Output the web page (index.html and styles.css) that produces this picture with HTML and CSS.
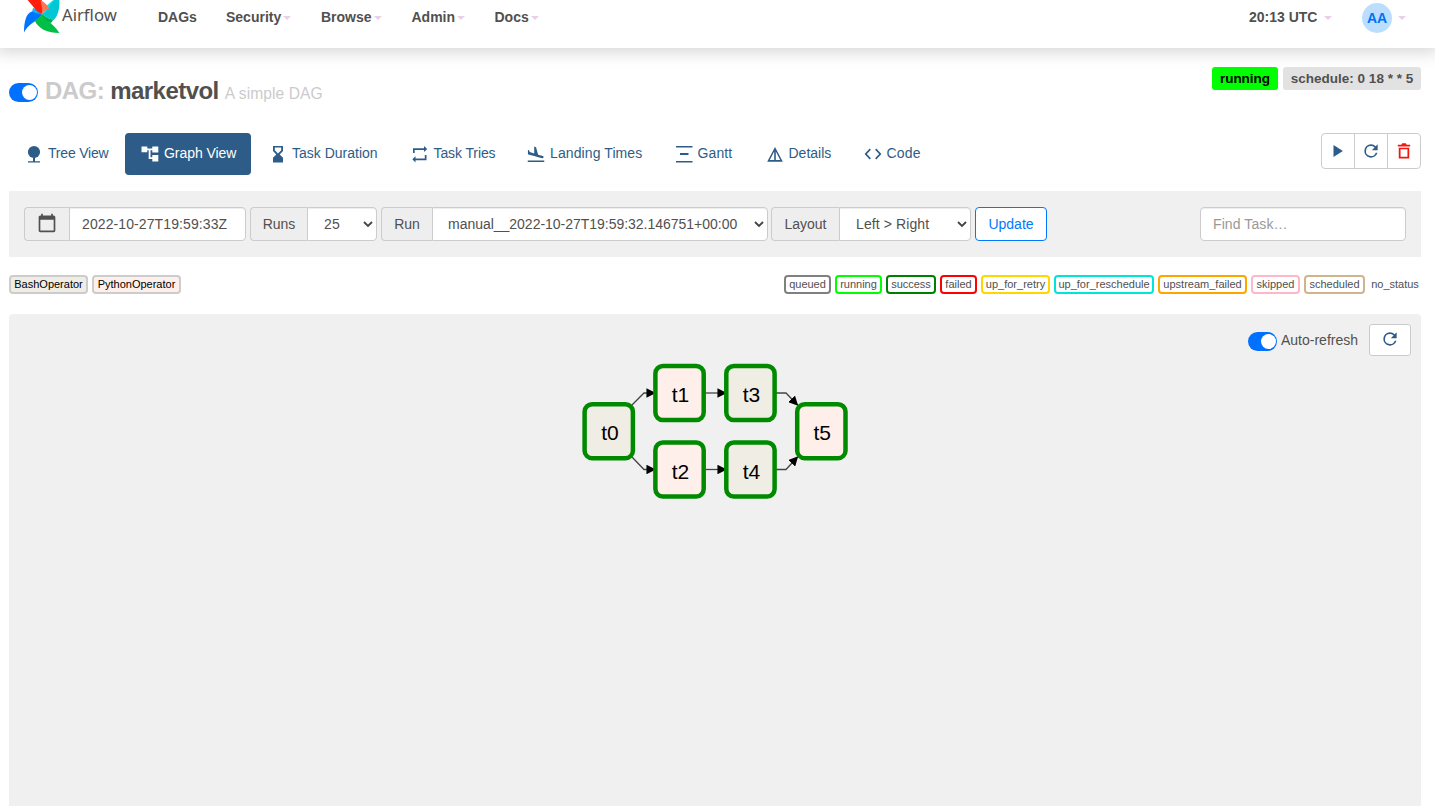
FILE: index.html
```
<!DOCTYPE html>
<html lang="en">
<head>
<meta charset="utf-8">
<title>marketvol - Graph - Airflow</title>
<link rel="stylesheet" href="styles.css">
</head>
<body>
<nav class="navbar">
  <a class="brand">
    <svg class="pinwheel" width="38" height="36" viewBox="0 0 38 36">
      <path fill="#0cb6ff" d="M9 12 L10 8 Q15 9 19 13.500 L15 16 Z"/>
      <path fill="#11e1ee" d="M19 13.500 L21 8 L29 1 L34 -2 L30 8 Z"/>
      <path fill="#00ad46" d="M19 13.500 Q24 19 30.500 19.500 L28 23 L20 20 Z"/>
      <path fill="#0073ff" d="M1 32.500 C1 22 3 13 9 11.500 C12 13 15 14.500 19 13.500 C16 22 7 21 1 32.500 Z"/>
      <path fill="#00bf46" d="M11.500 20 C16 19 17.500 16 19 13.500 C21 21 29 21 36.500 33 C25 33 15 29 11.500 20 Z"/>
      <path fill="#00c7d4" d="M36 -3 C37.500 7 35 17 30.500 20 C26 19 22 17 19 13.500 C27 11 25 3 36 -3 Z"/>
      <path fill="#ff1e0b" d="M1 -4 L18 -4 C19 0 19 4 21 7 L19 13.500 C13 13 10 5 1 -4 Z"/>
      <path fill="#ff7557" d="M19 13.500 C20 9 18 4 17.500 0 C21 2 25 5 26 9 C23 10 21 11 19 13.500 Z"/>
    </svg>
    <span class="brand-name">Airflow</span>
  </a>
  <a class="nav-link n-dags">DAGs</a>
  <a class="nav-link n-security">Security<i class="caret"></i></a>
  <a class="nav-link n-browse">Browse<i class="caret"></i></a>
  <a class="nav-link n-admin">Admin<i class="caret"></i></a>
  <a class="nav-link n-docs">Docs<i class="caret"></i></a>
  <div class="nav-right">
    <a class="nav-link clock">20:13 UTC<i class="caret"></i></a>
    <a class="nav-link user"><span class="avatar">AA</span><i class="caret"></i></a>
  </div>
</nav>
<main class="page">
  <header class="dag-header">
    <span class="toggle"></span>
    <h1 class="dag-title"><span class="muted">DAG:</span> marketvol <small>A simple DAG</small></h1>
    <div class="dag-status">
      <span class="label label-running">running</span>
      <span class="label label-schedule">schedule: 0 18 * * 5</span>
    </div>
  </header>
  <div class="tab-row">
    <ul class="tabs">
      <li class="tab t-tree"><svg class="icon" viewBox="0 0 18 18"><circle cx="9" cy="7" r="6.100"/><path d="M8 12h2v4.300h5v1.200H3v-1.200h5z"/></svg><span>Tree View</span></li>
      <li class="tab t-graph active"><svg class="icon" viewBox="0 0 18 18"><path d="M.5 1.500h5.800v2h5V1.500h6v6h-6v-2.200H9.500v7h1.800V10h6v6.500h-6v-2.400H7.700V5.300H6.300v1.900H.500z"/></svg><span>Graph View</span></li>
      <li class="tab t-duration"><svg class="icon" viewBox="0 0 18 18"><path fill-rule="evenodd" d="M4 1h10v5l-3.300 3.400L14 12.800V17.500H4v-4.700l3.300-3.400L4 6zM5.800 2.500v2.800L9 8.500l3.200-3.200V2.500z"/></svg><span>Task Duration</span></li>
      <li class="tab t-tries"><svg class="icon" viewBox="0 0 18 18"><path d="M2 8V3.200h11V1l3.200 3-3.200 3V4.900H3.700V8zM15.500 10v5.200h-11v2.200L1.300 14.300l3.200-3v2.200h9.300V10z"/></svg><span>Task Tries</span></li>
      <li class="tab t-landing"><svg class="icon" viewBox="0 0 24 24"><path d="M1 20.500h22v2H1zm8.680-5.770l4.350 1.160 6.310 1.620c.8.210 1.620-.26 1.840-1.060.21-.8-.26-1.620-1.060-1.840l-6.310-1.620-2.760-10.020L9.620 2v9.280L3.650 9.450l-.93-2.320-1.450-.39v5.670l1.600.43 6.810 1.890z"/></svg><span>Landing Times</span></li>
      <li class="tab t-gantt"><svg class="icon" viewBox="0 0 18 18"><path d="M1 1h16.500v1.500H1zM5 8h8.500v2H5zM1 16h16.500v1.500H1z"/></svg><span>Gantt</span></li>
      <li class="tab t-details"><svg class="icon" viewBox="0 0 18 18"><path fill-rule="evenodd" d="M9 2l7.800 14.800H1.200zM8.200 6.500L3.800 15h4.400zM9.800 6.500V15h4.400z"/></svg><span>Details</span></li>
      <li class="tab t-code"><svg class="icon" viewBox="0 0 24 24"><path d="M9.200 17.600L3.800 12l5.400-5.600L7.600 4.800.8 12l6.800 7.200zm5.600 0l5.400-5.600-5.400-5.600 1.600-1.600 6.800 7.200-6.800 7.200z"/></svg><span>Code</span></li>
    </ul>
    <div class="btn-group">
      <span class="btn-icon"><svg class="icon" viewBox="0 0 24 24"><path d="M6 4v16L18.500 12z"/></svg></span>
      <span class="btn-icon"><svg class="icon reload" viewBox="0 0 24 24"><path d="M17.650 6.350A7.950 7.950 0 0 0 12 4a8 8 0 1 0 7.730 10h-2.080A6 6 0 1 1 12 6c1.660 0 3.140.690 4.220 1.780L13 11h7V4z"/></svg></span>
      <span class="btn-icon danger"><svg class="icon" viewBox="0 0 24 24"><path fill-rule="evenodd" d="M5 7.500h14V22H5zM7.400 9.800v9.800h9.200V9.800zM3.800 3.500h4.700l1-1.700h5l1 1.700h4.700v2.500H3.800z"/></svg></span>
    </div>
  </div>
  <form class="filters">
    <div class="group g-date">
      <span class="addon"><svg width="24" height="24" viewBox="0 0 24 24"><path d="M20 3h-1V1h-2v2H7V1H5v2H4c-1.100 0-2 .9-2 2v16c0 1.100.9 2 2 2h16c1.100 0 2-.9 2-2V5c0-1.100-.9-2-2-2zm0 18H4V8h16z"/></svg></span>
      <span class="field">2022-10-27T19:59:33Z</span>
    </div>
    <div class="group g-runs"><span class="addon">Runs</span><span class="field select">25<svg class="chev" viewBox="0 0 10 7"><path d="M1 1l4 4 4-4"/></svg></span></div>
    <div class="group g-run"><span class="addon">Run</span><span class="field select"><span class="run-id">manual__2022-10-27T19:59:32.146751+00:00</span><svg class="chev" viewBox="0 0 10 7"><path d="M1 1l4 4 4-4"/></svg></span></div>
    <div class="group g-layout"><span class="addon">Layout</span><span class="field select">Left &gt; Right<svg class="chev" viewBox="0 0 10 7"><path d="M1 1l4 4 4-4"/></svg></span></div>
    <span class="update">Update</span>
    <span class="search">Find Task…</span>
  </form>
  <div class="legend">
    <span class="op op-bash">BashOperator</span>
    <span class="op op-python">PythonOperator</span>
    <div class="states">
      <span class="state s-queued">queued</span>
      <span class="state s-running">running</span>
      <span class="state s-success">success</span>
      <span class="state s-failed">failed</span>
      <span class="state s-retry">up_for_retry</span>
      <span class="state s-reschedule">up_for_reschedule</span>
      <span class="state s-upstream">upstream_failed</span>
      <span class="state s-skipped">skipped</span>
      <span class="state s-scheduled">scheduled</span>
      <span class="state s-none">no_status</span>
    </div>
  </div>
  <section class="graph">
    <div class="refresh">
      <span class="toggle"></span>
      <span class="refresh-text">Auto-refresh</span>
      <span class="refresh-btn"><svg class="icon reload" viewBox="0 0 24 24"><path d="M17.650 6.350A7.950 7.950 0 0 0 12 4a8 8 0 1 0 7.730 10h-2.080A6 6 0 1 1 12 6c1.660 0 3.140.690 4.220 1.780L13 11h7V4z"/></svg></span>
    </div>
    <svg class="dag" width="270" height="140" viewBox="580 361 270 140">
      <defs><marker id="arrow" viewBox="0 0 10 10" refX="9" refY="5" markerWidth="9.500" markerHeight="9.500" markerUnits="userSpaceOnUse" orient="auto"><path d="M0 0L10 5 0 10z"/></marker></defs>
      <g class="edges">
        <path d="M632 405L644 393H655"/><path d="M632 457L644 469.500H655"/>
        <path d="M704 393H726"/><path d="M704 469.500H726"/>
        <path d="M775 393H786L797.500 405"/><path d="M775 469.500H786L797.500 457"/>
      </g>
      <g class="nodes">
        <rect class="bash" x="584.600" y="404.200" width="48.300" height="54" rx="7.500"/>
        <rect class="python" x="655.400" y="366" width="48.300" height="54" rx="7.500"/>
        <rect class="python" x="655.400" y="442.500" width="48.300" height="54" rx="7.500"/>
        <rect class="bash" x="726.300" y="366" width="48.300" height="54" rx="7.500"/>
        <rect class="bash" x="726.300" y="442.500" width="48.300" height="54" rx="7.500"/>
        <rect class="python" x="797.200" y="404.200" width="48.300" height="54" rx="7.500"/>
      </g>
      <g class="names">
        <text x="610" y="440">t0</text><text x="680.500" y="402">t1</text><text x="680.500" y="479">t2</text>
        <text x="751.500" y="402">t3</text><text x="751.500" y="479">t4</text><text x="822.300" y="440">t5</text>
      </g>
    </svg>
  </section>
</main>
</body>
</html>
```
FILE: styles.css
```
* { box-sizing: border-box; }
body { margin: 0; height: 806px; overflow: hidden; display: flex; flex-direction: column; background: #fff; color: #51504f; font: 14px/20px "Liberation Sans", Arial, sans-serif; }
.navbar { height: 48px; flex: none; display: flex; align-items: flex-start; background: #fff; box-shadow: 0 0 16px 4px rgba(0,0,0,.17); padding-left: 23px; }
.brand { display: flex; width: 135px; }
.pinwheel { flex: none; }
.brand-name { font: 16.700px/20px "Noto Sans", sans-serif; margin: 5px 0 0 1px; }
.nav-link { display: flex; align-items: center; height: 34px; font-weight: bold; white-space: nowrap; }
.caret { border: 4px solid transparent; border-top-color: #e8d0e8; border-bottom: 0; margin: 1px 0 0 2px; }
.n-dags { width: 68px; }
.n-security { width: 95px; }
.n-browse { width: 90.500px; }
.n-admin { width: 83px; }
.nav-right { display: flex; margin-left: auto; padding-right: 29px; }
.clock { width: 113px; }
.clock .caret { margin-left: 7px; }
.user .caret { margin-left: 6px; }
.avatar { width: 30px; height: 30px; border-radius: 50%; background: #bbdeff; color: #0070f5; text-align: center; line-height: 31px; margin-top: 2px; }
.page { flex: 1; display: flex; flex-direction: column; padding: 0 14px 0 9px; }
.dag-header { height: 85px; flex: none; display: flex; align-items: flex-start; padding-top: 19px; }
.toggle { flex: none; width: 29px; height: 19px; border-radius: 10px; background: #0070ff; padding: 2px 1px; display: flex; justify-content: flex-end; }
.toggle::after { content: ""; width: 15px; height: 15px; border-radius: 50%; background: #fff; }
.dag-header .toggle { margin-top: 16px; }
.dag-title { margin: 10px 0 0 7px; font-size: 24px; line-height: 27px; font-weight: bold; letter-spacing: -.55px; white-space: nowrap; }
.dag-title .muted { color: #cbcbcb; }
.dag-title small { font-size: 15.600px; font-weight: normal; color: #cbcbcb; letter-spacing: .07px; }
.dag-status { display: flex; gap: 5px; margin-left: auto; }
.label { height: 23px; line-height: 23px; border-radius: 3px; font-weight: bold; font-size: 13.500px; text-align: center; white-space: nowrap; }
.label-running { width: 66px; background: #0f0; color: #000; }
.label-schedule { width: 138px; background: #e2e2e2; }
.tab-row { display: flex; height: 58px; flex: none; justify-content: space-between; }
.tabs { display: flex; margin: 0; padding: 0; list-style: none; color: #2d5c88; }
.tab { display: flex; align-items: center; height: 42px; padding-left: 16px; border-radius: 4px; white-space: nowrap; gap: 5px; }
.tab span { margin-bottom: 2px; }
.icon { width: 18px; height: 18px; fill: currentColor; flex: none; }
.reload { width: 20px; height: 20px; }
.t-tree { width: 116px; letter-spacing: -.2px; }
.active { width: 126px; background: #2d5c88; color: #fff; letter-spacing: -.06px; }
.t-duration { width: 143.500px; padding-left: 18px; }
.t-tries { width: 116.500px; letter-spacing: -.1px; }
.t-landing { width: 147.500px; letter-spacing: .1px; }
.t-gantt { width: 91px; letter-spacing: .1px; }
.t-details { width: 98px; }
.t-code { letter-spacing: .15px; }
.btn-group { display: flex; width: 100px; height: 36px; border: 1px solid #ccc; border-radius: 4px; color: #2d5c88; }
.btn-icon { flex: 1; display: flex; align-items: center; justify-content: center; border-right: 1px solid #ccc; }
.btn-icon:last-child { border: 0; }
.danger { color: #f01a10; }
.filters { height: 66px; flex: none; background: #f0f0f0; padding: 16px 15px; display: flex; gap: 4px; }
.group { display: flex; height: 34px; flex: none; }
.addon { border: 1px solid #ccc; border-right: 0; border-radius: 4px 0 0 4px; background: #eee; display: flex; align-items: center; justify-content: center; }
.addon svg { fill: #51504f; width: 20px; height: 20px; margin-bottom: 2px; }
.field { flex: 1; display: flex; align-items: center; background: #fff; border: 1px solid #ccc; border-radius: 0 4px 4px 0; padding-left: 12px; white-space: nowrap; box-shadow: inset 0 1px 1px rgba(0,0,0,.075); letter-spacing: .1px; }
.select { padding-left: 16px; padding-right: 3px; justify-content: space-between; }
.run-id { letter-spacing: -.02px; margin-left: -1px; }
.chev { width: 10px; height: 7px; fill: none; stroke: #444; stroke-width: 1.800; flex: none; }
.g-date { width: 222px; } .g-date .addon { width: 45px; }
.g-runs { width: 127px; } .g-runs .addon { width: 57px; }
.g-run { width: 387px; } .g-run .addon { width: 51px; }
.g-layout { width: 200px; margin-left: -1px; } .g-layout .addon { width: 68px; }
.update { width: 72px; height: 34px; flex: none; border: 1px solid #0078ff; border-radius: 4px; background: #fff; color: #0078ff; text-align: center; line-height: 33px; }
.search { margin-left: auto; width: 206px; height: 34px; border: 1px solid #ccc; border-radius: 4px; background: #fff; color: #999; padding-left: 12px; line-height: 33px; letter-spacing: .1px; box-shadow: inset 0 1px 1px rgba(0,0,0,.075); }
.legend { height: 57px; flex: none; display: flex; align-items: flex-start; gap: 4px; padding-top: 18px; }
.op, .state { height: 19px; border: 2px solid #ccc; border-radius: 4px; font-size: 11px; line-height: 15px; text-align: center; white-space: nowrap; flex: none; }
.op { color: #000; }
.op-bash { width: 79px; background: #f0ede4; }
.op-python { width: 89px; background: #ffefeb; }
.states { display: flex; margin-left: auto; gap: 4px; }
.s-queued { width: 47px; border-color: gray; }
.s-running { width: 47px; border-color: lime; }
.s-success { width: 50px; border-color: green; }
.s-failed { width: 37px; border-color: red; }
.s-retry { width: 69px; border-color: gold; }
.s-reschedule { width: 100px; border-color: #00e5d5; }
.s-upstream { width: 89px; border-color: orange; }
.s-skipped { width: 49px; border-color: #ffb6c9; }
.s-scheduled { width: 61px; border-color: tan; }
.s-none { width: 52px; border-color: transparent; }
.graph { flex: 1; background: #f0f0f0; border-radius: 4px 4px 0 0; display: flex; flex-direction: column; }
.refresh { display: flex; height: 47px; justify-content: flex-end; padding: 10px 10px 0 0; }
.refresh .toggle { margin-top: 8px; }
.refresh-text { margin: 6px 10px 0 4px; width: 78px; white-space: nowrap; }
.refresh-btn { width: 42px; height: 32px; border: 1px solid #ccc; border-radius: 3px; background: #fff; color: #2d5c88; display: flex; align-items: center; justify-content: center; padding-bottom: 2px; }
.dag { margin-left: 571px; }
.edges path { fill: none; stroke: #444; stroke-width: 1.300; marker-end: url(#arrow); }
.edges + .nodes rect { stroke: #008a00; stroke-width: 4.500; }
.nodes .bash { fill: #f0ede4; }
.nodes .python { fill: #ffefeb; }
.names text { font-size: 21px; text-anchor: middle; fill: #000; }
```
